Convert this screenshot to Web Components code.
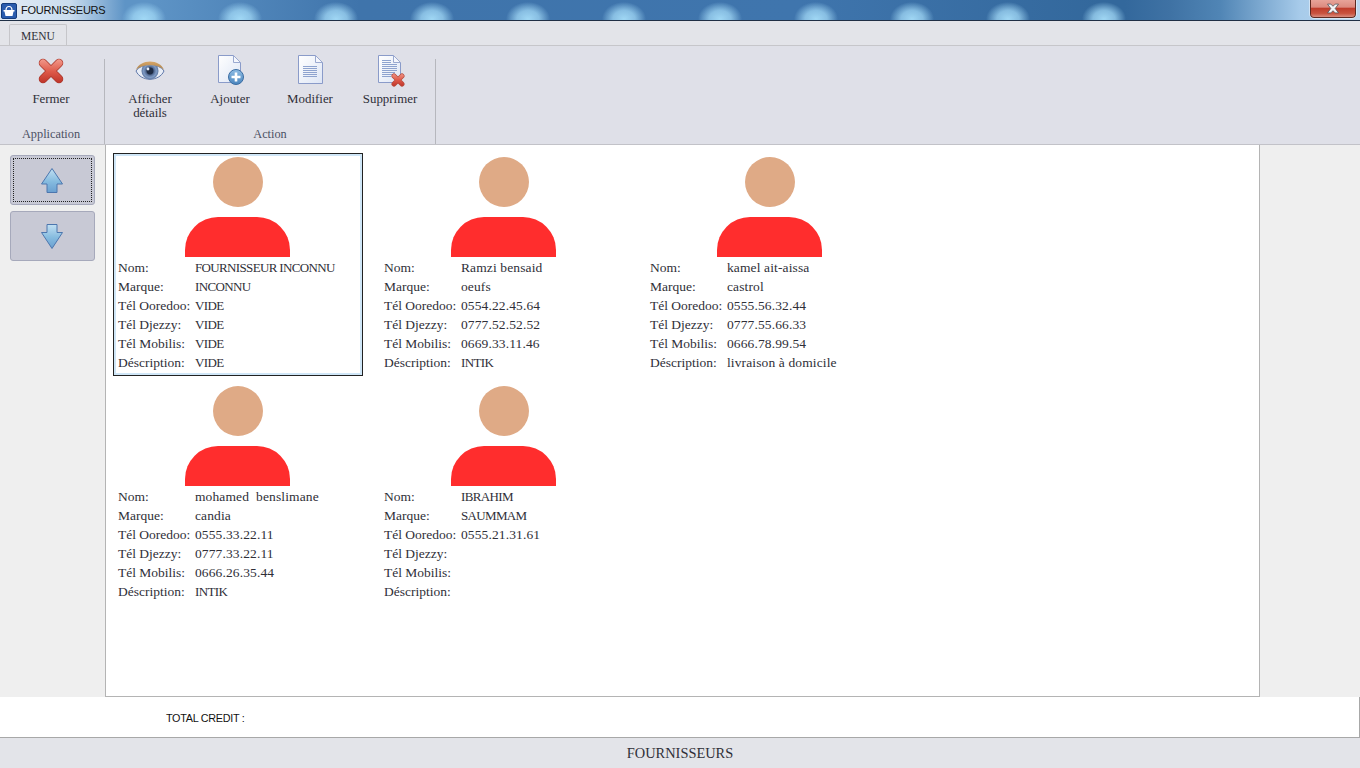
<!DOCTYPE html>
<html lang="fr">
<head>
<meta charset="utf-8">
<title>FOURNISSEURS</title>
<style>
html,body{margin:0;padding:0;height:100%;overflow:hidden}
body{font-family:"Liberation Serif",serif;color:#333}
</style>
</head>
<body>
<app-window>
  <title-bar slot="title">FOURNISSEURS</title-bar>
  <menu-strip slot="menu">MENU</menu-strip>
  <tool-ribbon slot="ribbon">
    <ribbon-group label="Application" style="width:104px">
      <ribbon-button icon="close" style="width:102px">Fermer</ribbon-button>
    </ribbon-group>
    <ribbon-group label="Action" inset style="width:330px">
      <ribbon-button icon="eye">Afficher<br>détails</ribbon-button>
      <ribbon-button icon="add">Ajouter</ribbon-button>
      <ribbon-button icon="edit">Modifier</ribbon-button>
      <ribbon-button icon="delete">Supprimer</ribbon-button>
    </ribbon-group>
  </tool-ribbon>
  <side-nav slot="side">
    <nav-button dir="up" focused></nav-button>
    <nav-button dir="down"></nav-button>
  </side-nav>
  <card-panel slot="content">
    <supplier-card selected nom="FOURNISSEUR INCONNU" marque="INCONNU" ooredoo="VIDE" djezzy="VIDE" mobilis="VIDE" desc="VIDE"></supplier-card>
    <supplier-card nom="Ramzi bensaid" marque="oeufs" ooredoo="0554.22.45.64" djezzy="0777.52.52.52" mobilis="0669.33.11.46" desc="INTIK"></supplier-card>
    <supplier-card nom="kamel ait-aissa" marque="castrol" ooredoo="0555.56.32.44" djezzy="0777.55.66.33" mobilis="0666.78.99.54" desc="livraison à domicile"></supplier-card>
    <supplier-card nom="mohamed  benslimane" marque="candia" ooredoo="0555.33.22.11" djezzy="0777.33.22.11" mobilis="0666.26.35.44" desc="INTIK"></supplier-card>
    <supplier-card nom="IBRAHIM" marque="SAUMMAM" ooredoo="0555.21.31.61" djezzy="" mobilis="" desc=""></supplier-card>
  </card-panel>
  <total-bar slot="total">TOTAL CREDIT :</total-bar>
  <status-bar slot="status">FOURNISSEURS</status-bar>
</app-window>

<script>
// page frame
class AppWindow extends HTMLElement{
    constructor(){
        super();
        this.attachShadow({mode:'open'});
        this.shadowRoot.innerHTML=`
        <style>
        :host{display:flex;flex-direction:column;width:1360px;height:768px;background:#efefef;overflow:hidden}
        .main{display:flex;height:552px}
        ::slotted([slot=side]){width:105px}
        </style>
        <slot name="title"></slot>
        <slot name="menu"></slot>
        <slot name="ribbon"></slot>
        <div class="main"><slot name="side"></slot><slot name="content"></slot></div>
        <slot name="total"></slot>
        <slot name="status"></slot>`;
    }
}
customElements.define('app-window',AppWindow);

class TitleBar extends HTMLElement{
    constructor(){
        super();
        this.attachShadow({mode:'open'});
        this.shadowRoot.innerHTML=`
        <style>
        :host{display:flex;align-items:center;height:21px;box-sizing:border-box;border-bottom:1px solid #1f2f45;position:relative;overflow:hidden;
            font:11px "Liberation Sans",sans-serif;letter-spacing:-.25px;color:#111;
            background:
              linear-gradient(90deg,#e4ecf5 0,#c9dcef 70px,rgba(120,170,215,0) 125px,rgba(63,114,164,0) 1125px,#3f72a4 1170px,#5085b5 1220px,#a7cbea 1300px,#bcd7ee 1360px),
              radial-gradient(ellipse 22px 17px at 48px 19px,rgba(165,220,248,.95),rgba(160,215,245,.75) 50%,rgba(160,215,245,0) 100%) 0 0/96px 20px repeat-x,
              linear-gradient(90deg,#5e94c6 150px,#3f74ab 360px,#3f75ad 800px,#33689c 1100px);
        }
        .icon{margin:2px 4px 0 1px;width:16px;height:16px;display:block;flex:none}
        .close{position:absolute;left:1310px;top:-1px;width:46px;height:19px;box-sizing:border-box;border:1px solid #5d2a22;border-top:none;border-radius:0 0 4px 4px;
            outline:1px solid rgba(255,255,255,.45);
            background:linear-gradient(#e9a79d 0,#dc8a7f 45%,#bf3d2c 52%,#c9533f 80%,#d98c7e 100%);display:flex;align-items:center;justify-content:center}
        </style>
        <svg class="icon" viewBox="0 0 16 16">
          <rect x=".5" y=".5" width="15" height="15" rx="1.500" fill="#2a5cae" stroke="#143c7c"/>
          <path d="M5 7.500 A3 4 0 0 1 11 7.500" stroke="#fff" stroke-width="1.200" fill="none"/>
          <path d="M2.500 7h11v1.500h-1l-1 4.500h-7l-1-4.500h-1z" fill="#fff"/>
        </svg>
        <span><slot></slot></span>
        <div class="close"><svg width="14" height="11" viewBox="0 0 12 10"><path d="M1 1h3l2 2 2-2h3L8 5l3 4H8L6 7 4 9H1l3-4z" fill="#f4f4f6" stroke="#4b4f58" stroke-width=".7"/></svg></div>`;
    }
}
customElements.define('title-bar',TitleBar);

class MenuStrip extends HTMLElement{
    constructor(){
        super();
        this.attachShadow({mode:'open'});
        this.shadowRoot.innerHTML=`
        <style>
        :host{display:flex;align-items:flex-end;height:25px;box-sizing:border-box;background:#e3e4e9;border-bottom:1px solid #c6c6ca;padding-left:9px}
        .tab{width:58px;height:21px;box-sizing:border-box;border:1px solid #c6c6ca;border-bottom:none;border-radius:2px 2px 0 0;background:#e3e4e9;
            font:11.500px "Liberation Serif",serif;color:#2f2f38;display:flex;align-items:center;justify-content:center;padding-top:2px}
        </style>
        <div class="tab"><slot></slot></div>`;
    }
}
customElements.define('menu-strip',MenuStrip);

class ToolRibbon extends HTMLElement{
    constructor(){
        super();
        this.attachShadow({mode:'open'});
        this.shadowRoot.innerHTML=`
        <style>
        :host{display:flex;height:99px;box-sizing:border-box;background:#dfe0e8;border-bottom:1px solid #c2c2c8}
        </style>
        <slot></slot>`;
    }
}
customElements.define('tool-ribbon',ToolRibbon);

class RibbonGroup extends HTMLElement{
    constructor(){
        super();
        this.attachShadow({mode:'open'});
        this.shadowRoot.innerHTML=`
        <style>
        :host{display:block;height:98px;position:relative;margin-right:1px;font:12.300px "Liberation Serif",serif;color:#333}
        :host::after{content:"";position:absolute;right:-1px;top:13px;bottom:0;width:1px;background:#b6b7bd}
        .items{display:flex;height:79px}
        :host([inset]) .items{padding-left:5px}
        .label{height:19px;line-height:19px;text-align:center;color:#4c5164}
        :host(:not([inset])) .label{padding-right:2px}
        </style>
        <div class="items"><slot></slot></div>
        <div class="label"></div>`;
    }
    connectedCallback(){
        this.shadowRoot.querySelector('.label').textContent=this.getAttribute('label');
    }
}
customElements.define('ribbon-group',RibbonGroup);

// shared bits of the document icons
const PAGE_FILL=`<linearGradient id="pg" x1="0" y1="0" x2="1" y2="1"><stop offset="0" stop-color="#ffffff"/><stop offset="1" stop-color="#dde5f5"/></linearGradient>`;
const RED_X=`<linearGradient id="rx" gradientUnits="userSpaceOnUse" x1="0" y1="Y1" x2="0" y2="Y2"><stop offset="0" stop-color="#f29a8c"/><stop offset=".5" stop-color="#de5a4a"/><stop offset="1" stop-color="#bb3026"/></linearGradient>`;
const page=(x,w,h,f)=>`<path d="M${x}.5 .5h${w-f}l${f} ${f}v${h-f}h-${w}z" fill="url(#pg)" stroke="#8a9bc9"/>
      <path d="M${x+w-f}.5 .5v${f}h${f}z" fill="#f4f6fc" stroke="#9aa9d0"/>`;

const RIBBON_ICONS={
    close:`<defs>${RED_X.replace('Y1','4').replace('Y2','29')}</defs>
      <path d="M8 8L24 24M24 8L8 24" stroke="#a9382d" stroke-width="8.500" stroke-linecap="round"/>
      <path d="M8 8L24 24M24 8L8 24" stroke="url(#rx)" stroke-width="7" stroke-linecap="round"/>`,
    eye:`<defs><radialGradient id="iris"><stop offset="0" stop-color="#22304a"/><stop offset=".35" stop-color="#3d5278"/><stop offset=".75" stop-color="#7e9ac4"/><stop offset="1" stop-color="#5d769f"/></radialGradient>
      <linearGradient id="br" x1="0" y1="0" x2="0" y2="1"><stop offset="0" stop-color="#d9a768"/><stop offset="1" stop-color="#a8814e"/></linearGradient></defs>
      <path d="M2 16 C7 8 25 8 30 16 C25 27 7 27 2 16z" fill="#e8edf6" stroke="#5f78aa"/>
      <circle cx="16" cy="16" r="8.500" fill="url(#iris)"/>
      <circle cx="16" cy="16" r="3.400" fill="#1f2c44"/>
      <circle cx="14" cy="14" r="1.400" fill="#e6edf8"/>
      <path d="M2 15 C6 3.500 26 3.500 30 15 C25 8.500 7 8.500 2 15z" fill="url(#br)"/>`,
    add:`<defs>${PAGE_FILL}<linearGradient id="cb" x1="0" y1="0" x2="0" y2="1"><stop offset="0" stop-color="#8fbde4"/><stop offset="1" stop-color="#4a85bd"/></linearGradient></defs>
      ${page(4,22,27,7)}
      <circle cx="22" cy="22" r="7.500" fill="url(#cb)" stroke="#3b6da3"/>
      <path d="M22 17.500v9M17.500 22h9" stroke="#fff" stroke-width="2.600"/>`,
    edit:`<defs>${PAGE_FILL}</defs>
      ${page(4,24,28,7)}
      <path d="M9 11.500h14M9 13.500h14M9 15.500h14M9 17.500h14M9 19.500h14M9 21.500h14" stroke="#8ea3cf"/>`,
    delete:`<defs>${PAGE_FILL}${RED_X.replace('Y1','18').replace('Y2','32')}</defs>
      ${page(4,22,27,7)}
      <path d="M8 5.500h9M8 7.500h9M8 9.500h15M8 11.500h15M8 13.500h15M8 15.500h15M8 17.500h13M8 19.500h11M8 21.500h9" stroke="#8ea3cf"/>
      <path d="M20 21L28 29M28 21L20 29" stroke="#b4493a" stroke-width="5" stroke-linecap="round"/>
      <path d="M20 21L28 29M28 21L20 29" stroke="url(#rx)" stroke-width="3.800" stroke-linecap="round"/>`
};

class RibbonButton extends HTMLElement{
    constructor(){
        super();
        this.attachShadow({mode:'open'});
        this.shadowRoot.innerHTML=`
        <style>
        :host{display:block;width:80px;height:79px;text-align:center;font:12.900px/14px "Liberation Serif",serif;color:#2f2f38}
        svg{display:block;margin:9px auto 0;width:32px;height:32px}
        .text{margin-top:5px}
        </style>
        <svg viewBox="0 0 32 32"></svg>
        <div class="text"><slot></slot></div>`;
    }
    connectedCallback(){
        this.shadowRoot.querySelector('svg').innerHTML=RIBBON_ICONS[this.getAttribute('icon')];
    }
}
customElements.define('ribbon-button',RibbonButton);

class SideNav extends HTMLElement{
    constructor(){
        super();
        this.attachShadow({mode:'open'});
        this.shadowRoot.innerHTML=`
        <style>
        :host{display:flex;flex-direction:column;gap:6px;box-sizing:border-box;padding:10px 10px 0;background:#efefef}
        </style>
        <slot></slot>`;
    }
}
customElements.define('side-nav',SideNav);

class NavButton extends HTMLElement{
    constructor(){
        super();
        this.attachShadow({mode:'open'});
        const up=this.getAttribute('dir')==='up';
        const id=up?'au':'ad';
        const shape=up
            ?'M11 .5 L21.500 16 H16 V24.500 H6 V16 H.5z'
            :'M6 .5 H16 V8.500 H21.500 L11 24.500 L.5 8.500 H6z';
        this.shadowRoot.innerHTML=`
        <style>
        :host{display:flex;align-items:center;justify-content:center;position:relative;width:85px;height:50px;box-sizing:border-box;background:#c8c9d5;border:1px solid #a6a9bb;border-radius:3px}
        :host([focused])::after{content:"";position:absolute;inset:2px;border:1px dotted #222}
        svg{display:block;width:22px;height:25px;margin-right:2px}
        </style>
        <svg viewBox="0 0 22 25"><defs><linearGradient id="${id}" x1="0" y1="0" x2="0" y2="1"><stop offset="0" stop-color="#c3e0f2"/><stop offset=".55" stop-color="#85bbdf"/><stop offset="1" stop-color="#6a9fd0"/></linearGradient></defs>
        <path d="${shape}" fill="url(#${id})" stroke="#4c76ae"/></svg>`;
    }
}
customElements.define('nav-button',NavButton);

class CardPanel extends HTMLElement{
    constructor(){
        super();
        this.attachShadow({mode:'open'});
        this.shadowRoot.innerHTML=`
        <style>
        :host{display:grid;grid-template-columns:repeat(3,266px);grid-auto-rows:229px;align-content:start;width:1155px;height:552px;box-sizing:border-box;
            padding:8px 0 0 7px;background:#fff;border-left:1px solid #b4b4b4;border-right:1px solid #b4b4b4;border-bottom:1px solid #b4b4b4}
        </style>
        <slot></slot>`;
    }
}
customElements.define('card-panel',CardPanel);

class SupplierCard extends HTMLElement{
    constructor(){
        super();
        this.attachShadow({mode:'open'});
        this.shadowRoot.innerHTML=`
        <style>
        :host{display:block;width:250px;height:223px;box-sizing:border-box;border:1px solid transparent;padding-top:3px;font:13.500px/19px "Liberation Serif",serif;color:#2f2f38}
        :host([selected]){border-color:#222;box-shadow:inset 0 0 0 2px #cfe6f7}
        .avatar{display:flex;flex-direction:column;align-items:center;height:101px}
        .head{width:50px;height:50px;border-radius:50%;background:#dfaa86}
        .body{width:105px;height:40px;margin:10px 1px 0 0;background:#ff2d2d;border-radius:33px 33px 0 0}
        .rows{display:grid;grid-template-columns:77px 1fr;grid-auto-rows:19px;align-items:baseline;padding-left:4px}
        .v{white-space:pre;letter-spacing:.12px}
        .caps{font-size:13px;letter-spacing:-.65px}
        </style>
        <div class="avatar"><div class="head"></div><div class="body"></div></div>
        <div class="rows"></div>`;
    }
    connectedCallback(){
        const rows=[['Nom:','nom'],['Marque:','marque'],['Tél Ooredoo:','ooredoo'],['Tél Djezzy:','djezzy'],['Tél Mobilis:','mobilis'],['Déscription:','desc']];
        const box=this.shadowRoot.querySelector('.rows');
        rows.forEach(r=>{
            const k=document.createElement('div');
            k.textContent=r[0];
            const v=document.createElement('div');
            const text=this.getAttribute(r[1])||'';
            // capitals run wider than the original face, tighten them
            v.className=/^[A-Z ]+$/.test(text)?'v caps':'v';
            v.textContent=text;
            box.append(k,v);
        });
    }
}
customElements.define('supplier-card',SupplierCard);

class TotalBar extends HTMLElement{
    constructor(){
        super();
        this.attachShadow({mode:'open'});
        this.shadowRoot.innerHTML=`
        <style>
        :host{display:flex;align-items:center;height:41px;box-sizing:border-box;padding:1px 0 0 166px;background:#fff;border-bottom:1px solid #a8a8a8;border-right:1px solid #a8a8a8;font:10.800px "Liberation Sans",sans-serif;letter-spacing:-.28px;color:#111}
        </style>
        <slot></slot>`;
    }
}
customElements.define('total-bar',TotalBar);

class StatusBar extends HTMLElement{
    constructor(){
        super();
        this.attachShadow({mode:'open'});
        this.shadowRoot.innerHTML=`
        <style>
        :host{display:flex;align-items:center;justify-content:center;flex:1;background:#e3e4e9;font:14.400px "Liberation Serif",serif;color:#2f2f38}
        </style>
        <slot></slot>`;
    }
}
customElements.define('status-bar',StatusBar);
</script>
</body>
</html>
